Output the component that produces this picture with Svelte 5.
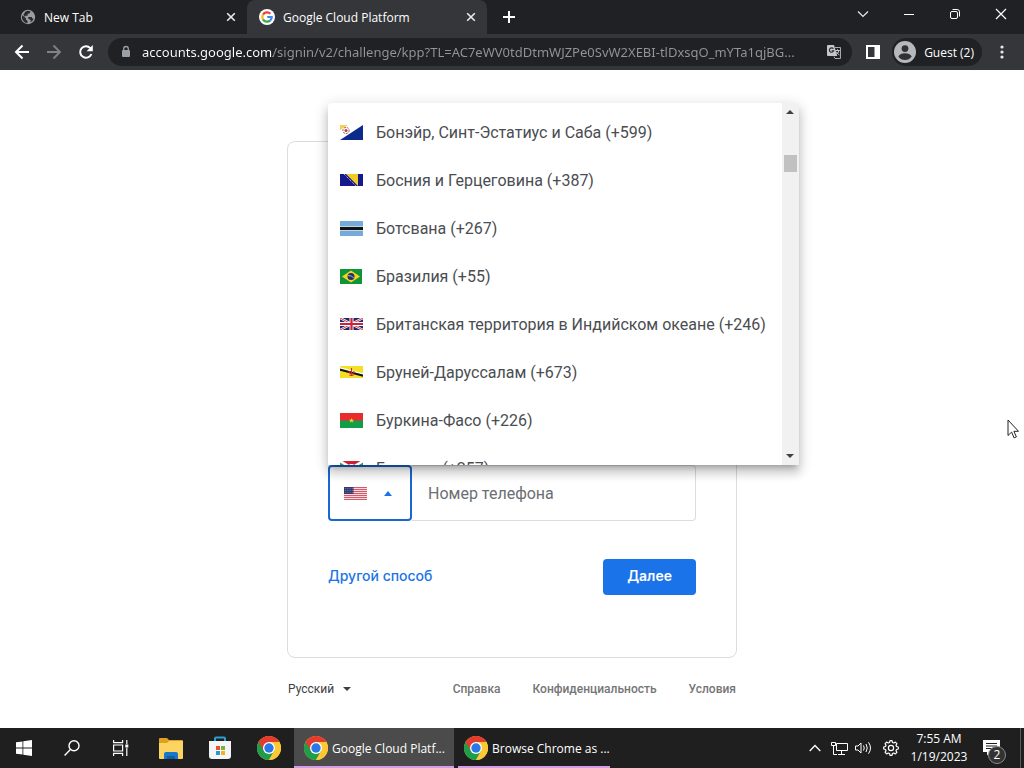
<script>
  const tabs = [
    { title: 'New Tab', icon: 'globe', active: false },
    { title: 'Google Cloud Platform', icon: 'google', active: true },
  ]

  const countries = [
    { code: 'bq', name: 'Бонэйр, Синт-Эстатиус и Саба', dial: '+599' },
    { code: 'ba', name: 'Босния и Герцеговина', dial: '+387' },
    { code: 'bw', name: 'Ботсвана', dial: '+267' },
    { code: 'br', name: 'Бразилия', dial: '+55' },
    { code: 'io', name: 'Британская территория в Индийском океане', dial: '+246' },
    { code: 'bn', name: 'Бруней-Даруссалам', dial: '+673' },
    { code: 'bf', name: 'Буркина-Фасо', dial: '+226' },
    { code: 'bi', name: 'Бурунди', dial: '+257' },
  ]

  const tasks = [
    { title: 'Google Cloud Platf...', active: true },
    { title: 'Browse Chrome as ...', active: false },
  ]

  let url = $state('accounts.google.com/signin/v2/challenge/kpp?TL=AC7eWV0tdDtmWJZPe0SvW2XEBI-tlDxsqO_mYTa1qjBG...')
  let phone = $state('')
  let open = $state(true)
</script>

{#snippet cross()}
  <svg width="10" height="10" viewBox="0 0 10 10"><path d="M1.2 1.2l7.6 7.6M8.8 1.2L1.2 8.8" stroke="#e8eaed" stroke-width="1.6" /></svg>
{/snippet}

{#snippet chrome()}
  <svg width="24" height="24" viewBox="0 0 24 24">
    <circle cx="12" cy="12" r="12" fill="#fcc934" />
    <path d="M12 12L1.6 6A12 12 0 0 0 12 24l5.2-9z" fill="#1e9e4a" />
    <path d="M12 6H22.4A12 12 0 0 0 1.6 6l5.2 9L12 12z" fill="#e33b2e" />
    <path d="M12 6h10.4A12 12 0 0 1 12 24l5.2-9z" fill="#fcc934" />
    <circle cx="12" cy="12" r="6" fill="#fff" />
    <circle cx="12" cy="12" r="4.7" fill="#2a78e8" />
  </svg>
{/snippet}

{#snippet flag(code)}
  {#if code === 'bq'}
    <svg width="23" height="15" viewBox="0 0 23 15">
      <path d="M0 0h23v15H0z" fill="#fff" />
      <path d="M23 0v15H0z" fill="#0b2a8c" />
      <path d="M0 0h8L0 5z" fill="#f5cf57" />
      <circle cx="6" cy="5.5" r="3.1" fill="none" stroke="#6b5148" stroke-width=".9" stroke-dasharray="2 1" />
      <circle cx="6" cy="5.5" r="1.5" fill="#dc3038" />
    </svg>
  {:else if code === 'ba'}
    <svg width="23" height="12" viewBox="0 0 23 12">
      <path d="M0 0h23v12H0z" fill="#17188c" />
      <path d="M6 0h12v12z" fill="#f0cc20" />
      <path d="M4 0l12 12" stroke="#c8cbe6" stroke-width="1" stroke-dasharray="1.2 1" />
    </svg>
  {:else if code === 'bw'}
    <svg width="23" height="15" viewBox="0 0 23 15">
      <path d="M0 0h23v15H0z" fill="#75aadb" />
      <path d="M0 5h23v5H0z" fill="#c4d6e0" />
      <path d="M0 6h23v3H0z" fill="#101414" />
    </svg>
  {:else if code === 'br'}
    <svg width="22" height="15" viewBox="0 0 22 15">
      <path d="M0 0h22v15H0z" fill="#119438" />
      <path d="M11 1.5l9 6-9 6-9-6z" fill="#f2d61e" />
      <circle cx="11" cy="7.5" r="3.5" fill="#242c6c" />
      <path d="M7.8 6.5q3.6-.2 6.1 2.4" fill="none" stroke="#c7d3d3" stroke-width=".8" />
    </svg>
  {:else if code === 'io'}
    <svg width="23" height="12" viewBox="0 0 23 12">
      <path d="M0 0h23v12H0z" fill="#1c2870" />
      <path d="M0 0l23 12M23 0L0 12" stroke="#fff" stroke-width="2.4" />
      <path d="M0 0l23 12M23 0L0 12" stroke="#cf2138" stroke-width=".9" />
      <path d="M11.5 0v12M0 6h23" stroke="#fff" stroke-width="4" />
      <path d="M11.5 0v12M0 6h23" stroke="#cf2138" stroke-width="2.2" />
    </svg>
  {:else if code === 'bn'}
    <svg width="23" height="12" viewBox="0 0 23 12">
      <path d="M0 0h23v12H0z" fill="#f5df24" />
      <path d="M0 2l23 6v2.8L0 4.8z" fill="#161616" />
      <path d="M0 1.2l23 6v1.2L0 2.4z" fill="#fff" />
      <path d="M11.5 2v8M9 5q.4 3 2.5 3T14 5M9.4 9.2h4.2" fill="none" stroke="#cc2d28" stroke-width="1.1" />
    </svg>
  {:else if code === 'bf'}
    <svg width="23" height="15" viewBox="0 0 23 15">
      <path d="M0 0h23v8H0z" fill="#ea2b2e" />
      <path d="M0 7.5h23V15H0z" fill="#109e48" />
      <path d="M11.5 5l.7 1.8h1.9l-1.5 1.1.6 1.8-1.7-1.1-1.7 1.1.6-1.8-1.5-1.1h1.9z" fill="#fcd116" />
    </svg>
  {:else if code === 'bi'}
    <svg width="23" height="14" viewBox="0 0 23 14">
      <path d="M0 0h23v14H0z" fill="#cc2030" />
      <path d="M0 0v14l11.5-7zM23 0v14L11.5 7z" fill="#2a9850" />
      <path d="M0 0l23 14M23 0L0 14" stroke="#fff" stroke-width="2.6" />
      <circle cx="11.5" cy="7" r="4" fill="#fff" />
    </svg>
  {:else}
    <svg width="23" height="13" viewBox="0 0 23 13">
      <path d="M0 0h23v13H0z" fill="#f3dde1" />
      <path d="M0 .5h23M0 2.5h23M0 4.5h23M0 6.5h23M0 8.5h23M0 10.5h23M0 12.5h23" stroke="#d85868" />
      <path d="M0 0h9.5v7H0z" fill="#333a70" />
      <path d="M1 1.5h8M1 3.5h8M1 5.5h8" stroke="#9298bc" stroke-width=".7" stroke-dasharray=".8 1" />
    </svg>
  {/if}
{/snippet}

<div class="screen">
  <header>
    <div class="tab-strip">
      {#each tabs as tab}
        <div class="tab" class:active={tab.active}>
          {#if tab.icon === 'globe'}
            <svg width="16" height="16" viewBox="0 0 16 16">
              <circle cx="8" cy="8" r="7.2" fill="#9b9ea1" />
              <path d="M2.3 6.2l3.5 2.7v1.3l1.7 1.7v2.3A6 6 0 0 1 2.3 6.2zM5.5 2.6Q8 1.1 10.5 2.5L9.8 4.3 7.6 5l.1 1.7H5.2L5 8 3.4 5.8zM8.2 8h3.5l.8 1.8 1.3-.5q-.9 3-3.4 4l.4-2.3L8.5 10z" fill="#292a2d" />
            </svg>
          {:else}
            <svg width="16" height="16" viewBox="0 0 16 16">
              <circle cx="8" cy="8" r="8" fill="#fff" />
              <g fill="none" stroke-width="2.2">
                <path d="M4 5.6A4.7 4.7 0 0 1 11.4 4.7" stroke="#ea4335" />
                <path d="M4 5.6a4.7 4.7 0 0 0 0 4.8" stroke="#fbbc04" />
                <path d="M4 10.4a4.7 4.7 0 0 0 7.3 1" stroke="#34a853" />
                <path d="M11.3 11.4A4.6 4.6 0 0 0 12.7 8H8.2" stroke="#4285f4" />
              </g>
            </svg>
          {/if}
          <span class="tab-title">{tab.title}</span>
          <button class="tab-close" aria-label="Close tab">{@render cross()}</button>
        </div>
      {/each}
      <button class="new-tab" aria-label="New tab">
        <svg width="12" height="12" viewBox="0 0 12 12"><path d="M6 0v12M0 6h12" stroke="#fff" stroke-width="2" /></svg>
      </button>
      <div class="window-controls">
        <button aria-label="Search tabs">
          <svg width="12" height="12" viewBox="0 0 12 12"><path d="M1 3.5l5 5 5-5" fill="none" stroke="#e8eaed" stroke-width="1.2" /></svg>
        </button>
        <button aria-label="Minimize">
          <svg width="12" height="12" viewBox="0 0 12 12"><path d="M1 6.5h10" stroke="#fff" /></svg>
        </button>
        <button aria-label="Restore">
          <svg width="12" height="12" viewBox="0 0 12 12" fill="none" stroke="#fff">
            <rect x="1.5" y="3.5" width="7" height="7" rx="1.5" />
            <path d="M3.5 1.5h4.7q2.3 0 2.3 2.3v4.7" />
          </svg>
        </button>
        <button aria-label="Close">
          <svg width="12" height="12" viewBox="0 0 12 12"><path d="M1 1l10 10M11 1L1 11" stroke="#fff" stroke-width="1.2" /></svg>
        </button>
      </div>
    </div>

    <div class="toolbar">
      <button class="nav" aria-label="Back">
        <svg width="16" height="16" viewBox="0 0 16 16"><path d="M15 8H2M8.5 1.5L2 8l6.5 6.5" fill="none" stroke="#fff" stroke-width="2" /></svg>
      </button>
      <button class="nav" aria-label="Forward">
        <svg width="16" height="16" viewBox="0 0 16 16"><path d="M1 8h13M7.5 1.5L14 8l-6.5 6.5" fill="none" stroke="#818386" stroke-width="1.8" /></svg>
      </button>
      <button class="nav" aria-label="Reload">
        <svg width="16" height="16" viewBox="0 0 16 16">
          <path d="M13.4 10A5.8 5.8 0 1 1 12.3 4.1" fill="none" stroke="#fff" stroke-width="2" />
          <path d="M14.8 1v6.2H8.6z" fill="#fff" />
        </svg>
      </button>
      <div class="omnibox">
        <svg width="10" height="14" viewBox="0 0 10 14">
          <rect x="1" y="5" width="8" height="7" rx="1" fill="#9aa0a6" />
          <path d="M2.7 6V3.8a2.3 2.3 0 0 1 4.6 0V6" fill="none" stroke="#9aa0a6" stroke-width="1.3" />
        </svg>
        <input class="url" type="text" aria-label="Address" bind:value={url} />
        <button aria-label="Translate this page">
          <svg width="16" height="16" viewBox="0 0 16 16">
            <path d="M2 1h6l3.2 11H2a1 1 0 0 1-1-1V2a1 1 0 0 1 1-1z" fill="#c3c6ca" />
            <path d="M7.4 4.8a2.2 2.2 0 1 0 .3 1.9H5.6" fill="none" stroke="#292a2d" stroke-width="1.1" />
            <path d="M9 3.5h5.5v11H9l-1-2" fill="none" stroke="#a5a8ac" />
            <path d="M9.2 6.5h4.6M11.5 5.3v1.2M13 6.6q-.8 2.8-3 4M10 7.8l3.4 3.2" fill="none" stroke="#c3c6ca" />
          </svg>
        </button>
      </div>
      <button class="panel" aria-label="Side panel">
        <svg width="14" height="14" viewBox="0 0 14 14"><path d="M0 0h14v14H0zM2 2v10h6.5V2z" fill="#fff" fill-rule="evenodd" /></svg>
      </button>
      <button class="profile">
        <svg width="22" height="22" viewBox="0 0 22 22">
          <circle cx="11" cy="11" r="11" fill="#b5b8bc" />
          <circle cx="11" cy="7.6" r="3.4" fill="#303134" />
          <path d="M4.3 15.5q2-3.2 6.7-3.2t6.7 3.2Q15.2 19 11 19t-6.7-3.5z" fill="#303134" />
        </svg>
        Guest (2)
      </button>
      <button class="menu" aria-label="Menu">
        <svg width="4" height="14" viewBox="0 0 4 14" fill="#e8eaed"><circle cx="2" cy="2" r="1.6" /><circle cx="2" cy="7" r="1.6" /><circle cx="2" cy="12" r="1.6" /></svg>
      </button>
    </div>
  </header>

  <main>
    <section class="card">
      <div class="phone-row">
        <div class="country">
          <button class="country-toggle" aria-label="Страна" aria-haspopup="listbox" aria-expanded={open} onclick={() => (open = !open)}>
            {@render flag('us')}
            <svg width="8" height="5" viewBox="0 0 8 5"><path d="M4 0l4 5H0z" fill="#1a73e8" /></svg>
          </button>
          {#if open}
            <div class="dropdown">
              <ul role="listbox" aria-label="Страна">
                {#each countries as country}
                  <li role="option" aria-selected="false">
                    <span class="flag">{@render flag(country.code)}</span>
                    {country.name} ({country.dial})
                  </li>
                {/each}
              </ul>
              <div class="scrollbar">
                <svg width="8" height="4" viewBox="0 0 8 4"><path d="M4 0l4 4H0z" fill="#404040" /></svg>
                <div class="thumb"></div>
                <svg width="8" height="4" viewBox="0 0 8 4"><path d="M0 0h8L4 4z" fill="#404040" /></svg>
              </div>
            </div>
          {/if}
        </div>
        <input class="phone" type="tel" aria-label="Номер телефона" placeholder="Номер телефона" bind:value={phone} />
      </div>
      <div class="actions">
        <button class="text-btn">Другой способ</button>
        <button class="primary-btn">Далее</button>
      </div>
    </section>

    <footer>
      <div class="language">
        <select aria-label="Язык">
          <option>Русский</option>
        </select>
        <svg width="8" height="4" viewBox="0 0 8 4"><path d="M0 0h8L4 4z" fill="#3c4043" /></svg>
      </div>
      <nav>
        <a href="#help">Справка</a>
        <a href="#privacy">Конфиденциальность</a>
        <a href="#terms">Условия</a>
      </nav>
    </footer>

    <svg class="cursor" width="12" height="20" viewBox="0 0 12 20">
      <path d="M1 1v15.5l3.6-3.4 2.5 5.8 2.3-1-2.5-5.6h4.6z" fill="#fff" stroke="#222" />
    </svg>
  </main>

  <div class="taskbar">
    <button class="system" aria-label="Start">
      <svg width="16" height="16" viewBox="0 0 16 16" fill="#fff"><path d="M0 2.3l6.5-.9v6.1H0zM7.3 1.3L16 0v7.5H7.3zM0 8.4h6.5v6.2L0 13.7zM7.3 8.4H16V16l-8.7-1.2z" /></svg>
    </button>
    <button class="system" aria-label="Search">
      <svg width="16" height="16" viewBox="0 0 16 16" fill="none" stroke="#fff" stroke-width="1.4"><circle cx="10" cy="5.8" r="5" /><path d="M6.4 9.5L.6 15.4" /></svg>
    </button>
    <button class="system" aria-label="Task view">
      <svg width="17" height="16" viewBox="0 0 17 16" fill="none" stroke="#fff" stroke-width="1.2">
        <path d="M1.6 0v2.6h9V0M1.6 16v-2.6h9V16M1.6 5h9v6h-9zM14.8 0v4M14.8 8v8" />
        <path d="M13.3 4.5h3v3h-3z" fill="#fff" stroke="none" />
      </svg>
    </button>
    <div class="pinned">
      <button aria-label="File Explorer">
        <svg width="24" height="22" viewBox="0 0 24 22">
          <path d="M0 2a1 1 0 0 1 1-1h7l2 2h13a1 1 0 0 1 1 1v6H0z" fill="#dfa020" />
          <path d="M0 6h8l2-2h14v17a1 1 0 0 1-1 1H1a1 1 0 0 1-1-1z" fill="#fcd462" />
          <path d="M5 22v-5a2 2 0 0 1 2-2h10a2 2 0 0 1 2 2v5z" fill="#1877c8" />
          <path d="M8 19h8v3H8z" fill="#0d5ea8" />
        </svg>
      </button>
      <button aria-label="Microsoft Store">
        <svg width="24" height="24" viewBox="0 0 24 24">
          <path d="M7 6V2.5a1 1 0 0 1 1-1h8a1 1 0 0 1 1 1V6" fill="none" stroke="#2ca0d0" stroke-width="2" />
          <path d="M1 5h22v15a3 3 0 0 1-3 3H4a3 3 0 0 1-3-3z" fill="#f3f5f7" />
          <path d="M8 10h4v4H8z" fill="#e8502c" /><path d="M13 10h4v4h-4z" fill="#78b33e" />
          <path d="M8 15h4v4H8z" fill="#2699d6" /><path d="M13 15h4v4h-4z" fill="#f1b322" />
        </svg>
      </button>
      <button aria-label="Google Chrome">{@render chrome()}</button>
    </div>
    <div class="tasks">
      {#each tasks as task}
        <button class="task" class:active={task.active}>{@render chrome()}<span>{task.title}</span></button>
      {/each}
    </div>
    <div class="tray">
      <button aria-label="Show hidden icons">
        <svg width="12" height="8" viewBox="0 0 12 8"><path d="M.7 7L6 1.5 11.3 7" fill="none" stroke="#fff" stroke-width="1.3" /></svg>
      </button>
      <button aria-label="Network">
        <svg width="17" height="14" viewBox="0 0 17 14" fill="none" stroke="#fff">
          <path d="M5.5 2.5h11v7h-11zM10.5 10v3M7 13.5h7M2.5 5v8.500H6" /><path d="M.5 1.5h4v3h-4z" />
        </svg>
      </button>
      <button aria-label="Volume">
        <svg width="17" height="14" viewBox="0 0 17 14" fill="none" stroke="#fff">
          <path d="M.5 5H3l3-3v10L3 9H.5zM8.5 4.5q1.5 2.5 0 5M11 3q2.5 4 0 8M13.5 1.3q4 5.7 0 11.4" />
        </svg>
      </button>
      <button class="gear" aria-label="Settings">
        <svg width="16" height="16" viewBox="0 0 16 16" fill="none" stroke="#fff" stroke-width="1.2" stroke-linejoin="round">
          <path d="M6.5 2.5L7 .7h2l.5 1.8 1.3.5 1.6-.9 1.5 1.5-.9 1.6.5 1.3 1.8.5v2l-1.8.5-.5 1.3.9 1.6-1.5 1.5-1.6-.9-1.3.5L9 15.3H7l-.5-1.8-1.3-.5-1.6.9-1.5-1.5.9-1.6-.5-1.3L.7 9V7l1.8-.5L3 5.2l-.9-1.6 1.5-1.5 1.6.9z" />
          <circle cx="8" cy="8" r="2.6" />
        </svg>
      </button>
      <button class="clock"><span>7:55 AM</span><span>1/19/2023</span></button>
      <button class="notifications" aria-label="Notifications">
        <svg width="18" height="16" viewBox="0 0 18 16"><path d="M0 0h17v12H7.5L4 15.5V12H0zM3 3v1h11V3zM3 5.5v1h11v-1zM3 8v1h7V8z" fill="#fff" fill-rule="evenodd" /></svg>
        <span class="badge">2</span>
      </button>
    </div>
  </div>
</div>

<style>
  :global(body) {
    background: #fff;
  }

  .screen {
    display: flex;
    flex-direction: column;
    min-height: 100vh;
    font-family: 'Open Sans', 'Noto Sans', sans-serif;
    font-size: 12px;
  }

  button {
    display: flex;
    align-items: center;
    justify-content: center;
    padding: 0;
    border: 0;
    background: none;
    color: inherit;
    font: inherit;
    cursor: pointer;
  }

  svg {
    flex: none;
    display: block;
  }

  header {
    color: #fff;
  }

  .tab-strip {
    display: flex;
    height: 34px;
    background: #202124;
  }

  .tab {
    display: flex;
    align-items: center;
    flex: 0 1 240px;
    box-sizing: border-box;
    min-width: 0;
    gap: 8px;
    padding: 0 8px 0 12px;
  }

  .tab:first-child {
    flex-basis: 247px;
    padding: 0 8px 0 20px;
  }

  .tab.active {
    background: #35363a;
    border-radius: 8px 8px 0 0;
  }

  .tab-title {
    flex: 1;
    overflow: hidden;
    white-space: nowrap;
  }

  .tab-close {
    width: 16px;
    height: 16px;
  }

  .new-tab {
    width: 44px;
  }

  .window-controls {
    display: flex;
    margin-left: auto;
    height: 28px;
  }

  .window-controls button {
    width: 46px;
  }

  .toolbar {
    display: flex;
    align-items: center;
    height: 36px;
    padding: 0 14px 0 6px;
    background: #35363a;
  }

  .nav {
    width: 32px;
    height: 28px;
  }

  .omnibox {
    display: flex;
    flex: 1;
    align-items: center;
    height: 28px;
    margin: 0 14px 0 6px;
    padding: 0 10px 0 13px;
    border-radius: 14px;
    background: #202124;
    min-width: 0;
  }

  .url {
    flex: 1;
    min-width: 0;
    margin: 0 12px 0 11px;
    padding: 0;
    border: 0;
    outline: none;
    /* host part is brighter than the path */
    background: linear-gradient(to right, #fff 131px, #92959a 131px);
    -webkit-background-clip: text;
    background-clip: text;
    color: transparent;
    caret-color: #fff;
    font-family: 'Noto Sans', 'Open Sans', sans-serif;
    font-size: 13px;
  }

  .panel {
    margin-right: 12px;
  }

  .profile {
    gap: 8px;
    height: 28px;
    padding: 0 8px 0 2px;
    border-radius: 14px;
    background: #202124;
  }

  .menu {
    width: 16px;
    margin-left: 12px;
  }

  main {
    position: relative;
    display: flex;
    flex: 1;
    flex-direction: column;
    align-items: center;
    padding: 71px 16px 0;
    font-family: Roboto, sans-serif;
  }

  .card {
    display: flex;
    flex-direction: column;
    justify-content: flex-end;
    box-sizing: border-box;
    width: 100%;
    max-width: 450px;
    min-height: 517px;
    padding: 40px 40px 62px;
    border: 1px solid #dadce0;
    border-radius: 8px;
  }

  .phone-row {
    display: flex;
    height: 56px;
  }

  .country {
    position: relative;
    flex: none;
    display: flex;
  }

  .country-toggle {
    gap: 17px;
    width: 84px;
    padding-right: 4px;
    border: 2px solid #1967d2;
    border-radius: 4px;
    background: #fff;
  }

  .dropdown {
    position: absolute;
    bottom: 100%;
    left: 0;
    z-index: 2;
    display: flex;
    height: 362px;
    overflow: hidden;
    background: #fff;
    border-radius: 4px 4px 0 0;
    box-shadow:
      0 5px 5px -3px rgba(0, 0, 0, 0.2),
      0 8px 10px 1px rgba(0, 0, 0, 0.14),
      0 3px 14px 2px rgba(0, 0, 0, 0.12);
  }

  .dropdown ul {
    margin: 0;
    padding: 5px 16px 0 12px;
    list-style: none;
  }

  .dropdown li {
    display: flex;
    align-items: center;
    gap: 12px;
    height: 48px;
    color: #4a4d51;
    font-size: 16px;
    white-space: nowrap;
  }

  .flag {
    width: 24px;
  }

  .scrollbar {
    display: flex;
    flex-direction: column;
    align-items: center;
    width: 17px;
    padding: 7px 0;
    box-sizing: border-box;
    background: #f1f1f1;
  }

  .thumb {
    width: 13px;
    height: 17px;
    margin: 41px 0 auto;
    background: #c1c1c1;
  }

  .phone {
    flex: 1;
    min-width: 0;
    padding: 0 16px;
    border: 1px solid #dadce0;
    border-left: 0;
    border-radius: 0 4px 4px 0;
    color: #202124;
    font: inherit;
    font-size: 16px;
  }

  .phone::placeholder {
    color: #6b6e72;
  }

  .actions {
    display: flex;
    justify-content: space-between;
    margin-top: 38px;
    font-family: Inter, 'Open Sans', sans-serif;
    font-size: 14px;
    font-weight: 500;
  }

  .actions button {
    height: 36px;
    padding-bottom: 3px;
  }

  .text-btn {
    color: #1a73e8;
  }

  .primary-btn {
    padding: 0 24px;
    border-radius: 4px;
    background: #1a73e8;
    color: #fff;
    font-weight: 600;
  }

  footer {
    display: flex;
    align-items: center;
    justify-content: space-between;
    width: 100%;
    max-width: 448px;
    padding: 22px 0;
    line-height: 18px;
  }

  .language {
    display: flex;
    align-items: center;
    gap: 8px;
  }

  select {
    appearance: none;
    padding: 0;
    border: 0;
    background: none;
    color: #3c4043;
    font: inherit;
  }

  footer nav {
    display: flex;
    gap: 32px;
  }

  footer a {
    color: #757575;
    font-weight: 500;
    text-decoration: none;
  }

  .cursor {
    position: absolute;
    top: 349px;
    right: 5px;
  }

  .taskbar {
    display: flex;
    height: 40px;
    background: #1f1f1f;
    color: #fff;
  }

  .system {
    width: 48px;
  }

  .pinned {
    display: flex;
    padding: 0 1px 0 2px;
  }

  .pinned button {
    width: 49px;
  }

  .tasks {
    display: flex;
    gap: 4px;
  }

  .task {
    justify-content: flex-start;
    gap: 4px;
    width: 152px;
    padding: 2px 0 0 6px;
    border-bottom: 2px solid #d49ce6;
    white-space: nowrap;
  }

  .task.active {
    width: 160px;
    padding-left: 10px;
    background: #4b4b4b;
  }

  .tray {
    display: flex;
    margin-left: auto;
    padding-right: 3px;
  }

  .tray button {
    width: 24px;
  }

  .tray .gear {
    width: 32px;
  }

  .tray .clock {
    flex-direction: column;
    width: 64px;
    line-height: 18px;
  }

  .tray .notifications {
    position: relative;
    width: 50px;
    padding-right: 8px;
    border-right: 1px solid #5a5a5a;
    box-sizing: border-box;
  }

  .badge {
    position: absolute;
    right: 14px;
    bottom: 4px;
    width: 16px;
    height: 16px;
    border: 1px solid #8a8a8a;
    border-radius: 50%;
    background: #333;
    font-size: 12px;
    line-height: 16px;
  }
</style>
